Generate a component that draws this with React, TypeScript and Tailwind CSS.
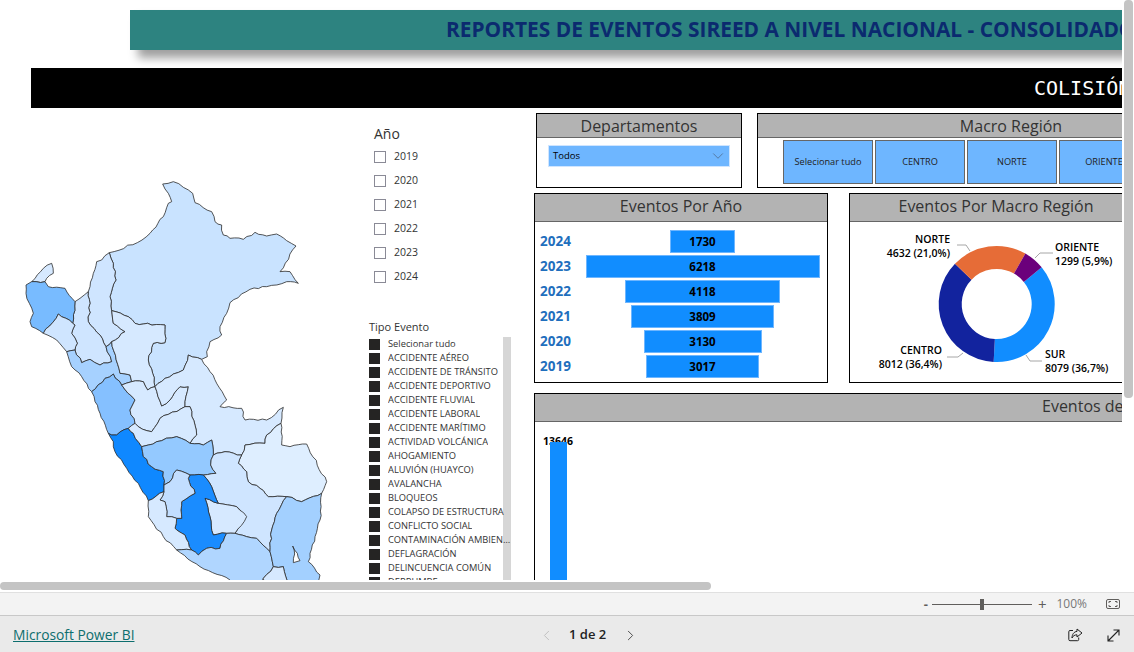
import React from "react";
import { ChevronDown, ChevronLeft, ChevronRight } from "lucide-react";

const years = ["2019", "2020", "2021", "2022", "2023", "2024"];

const tipos = [
  "Selecionar tudo",
  "ACCIDENTE AÉREO",
  "ACCIDENTE DE TRÁNSITO",
  "ACCIDENTE DEPORTIVO",
  "ACCIDENTE FLUVIAL",
  "ACCIDENTE LABORAL",
  "ACCIDENTE MARÍTIMO",
  "ACTIVIDAD VOLCÁNICA",
  "AHOGAMIENTO",
  "ALUVIÓN (HUAYCO)",
  "AVALANCHA",
  "BLOQUEOS",
  "COLAPSO DE ESTRUCTURA",
  "CONFLICTO SOCIAL",
  "CONTAMINACIÓN AMBIENTAL",
  "DEFLAGRACIÓN",
  "DELINCUENCIA COMÚN",
  "DERRUMBE",
];

const porAno = [
  { year: "2024", value: 1730, w: 65 },
  { year: "2023", value: 6218, w: 234 },
  { year: "2022", value: 4118, w: 155 },
  { year: "2021", value: 3809, w: 143 },
  { year: "2020", value: 3130, w: 118 },
  { year: "2019", value: 3017, w: 113 },
];

const macroButtons = ["Selecionar tudo", "CENTRO", "NORTE", "ORIENTE", "SUR"];

// coordinates are traced at 3x, the svg below scales them back down
const regions = [
  { fill: "#c9e3ff", d: "328,248 412,218 450,190 490,140 505,100 515,95 505,70 488,42 520,35 550,52 578,70 585,98 635,125 645,155 665,165 670,195 690,205 730,208 765,187 800,198 830,192 860,212 888,228 840,305 870,305 895,340 860,335 800,350 750,358 690,398 680,430 660,470 665,495 630,515 620,545 622,560 605,568 565,555 550,600 520,612 495,625 465,650 458,610 445,570 460,520 495,518 495,465 430,462 405,460 385,440 335,422 330,380 348,330 340,280" },
  { fill: "#cfe5ff", d: "328,248 340,280 348,330 330,380 335,422 340,460 375,485 335,515 318,530 300,495 265,455 270,400 265,365 270,350 280,310 290,275 305,270" },
  { fill: "#cfe5ff", d: "265,365 270,400 265,455 300,495 318,530 335,575 300,585 270,568 245,578 225,540 232,520 215,490 225,465 218,460 225,395 240,385" },
  { fill: "#d6e9ff", d: "95,335 130,295 155,280 160,310 140,325 135,335" },
  { fill: "#78bbff", d: "78,345 95,335 135,335 145,350 195,355 225,395 218,460 175,432 130,490 95,470 90,455 100,430 88,400 78,370" },
  { fill: "#cfe5ff", d: "130,490 175,432 218,460 225,465 215,490 232,520 225,540 200,545 170,510" },
  { fill: "#a6d1ff", d: "200,545 225,540 245,578 270,568 300,585 335,575 318,530 335,515 360,610 390,615 395,635 365,645 340,612 315,625 275,665 245,620 215,590" },
  { fill: "#85c0ff", d: "275,665 315,625 340,612 365,645 405,690 390,720 405,760 385,775 350,795 335,795 325,790 300,730 285,695" },
  { fill: "#0f88ff", d: "325,790 335,795 350,795 385,775 400,790 425,830 430,860 455,890 490,905 492,945 492,965 445,992 415,940 380,895 345,845 340,815" },
  { fill: "#d6e9ff", d: "335,422 385,440 405,460 430,462 495,465 495,518 460,520 445,570 458,610 465,650 443,660 430,635 395,635 390,615 360,610 335,515 375,485 340,460" },
  { fill: "#d6e9ff", d: "365,645 395,635 430,635 443,660 465,650 485,708 510,690 540,650 565,650 555,710 480,745 455,785 415,770 405,760 390,720 405,690" },
  { fill: "#d6e9ff", d: "465,650 495,625 520,612 550,600 565,555 605,568 630,605 680,690 660,710 725,715 735,750 800,750 850,712 843,760 800,795 795,820 735,825 725,855 675,845 640,855 635,810 610,825 570,820 590,795 570,710 555,710 565,650 540,650 510,690 485,708" },
  { fill: "#d6e9ff", d: "405,760 415,770 455,785 480,745 555,710 570,710 590,795 570,820 530,800 470,815 445,825 425,830 400,790 385,775" },
  { fill: "#94c9ff", d: "425,830 445,825 470,815 530,800 570,820 610,825 635,810 640,855 632,885 648,910 610,915 570,915 530,900 510,935 492,945 490,905 455,890 430,860" },
  { fill: "#deeeff", d: "843,760 845,825 870,830 920,822 980,935 965,970 905,995 860,980 805,980 780,955 745,935 740,905 715,880 725,855 735,825 795,820 800,795" },
  { fill: "#cfe5ff", d: "640,855 675,845 725,855 715,880 740,905 745,935 780,955 805,980 860,980 830,1030 815,1080 810,1145 770,1105 740,1100 705,1090 735,1040 710,1010 655,1000 635,950 610,915 648,910 632,885" },
  { fill: "#d6e9ff", d: "615,985 655,1000 710,1010 740,1040 705,1090 680,1090 640,1095 630,1040" },
  { fill: "#1a8cff", d: "570,915 610,915 635,950 655,1000 615,985 630,1040 640,1095 680,1090 660,1135 620,1135 595,1155 575,1140 555,1095 525,1075 530,1045 545,1045 545,995 585,970 565,925" },
  { fill: "#c2deff", d: "510,935 530,900 570,915 565,925 585,970 545,995 545,1045 530,1045 500,1040 495,995 480,990 492,965 492,945" },
  { fill: "#d6e9ff", d: "445,992 492,965 480,990 495,995 500,1040 530,1045 525,1075 555,1095 575,1140 530,1140 490,1100 445,1040" },
  { fill: "#b0d6ff", d: "530,1140 575,1140 595,1155 620,1135 660,1135 680,1090 705,1090 740,1100 770,1105 810,1145 820,1190 790,1225 780,1260 720,1260 690,1230 600,1190" },
  { fill: "#a3d0ff", d: "860,980 905,995 965,970 960,1050 945,1100 930,1150 925,1175 960,1215 945,1260 870,1260 850,1190 820,1190 810,1145 815,1080 830,1030" },
  { fill: "#d6e9ff", d: "790,1225 820,1190 850,1190 870,1260 790,1260" },
  { fill: "#ffffff", d: "878,1128 892,1150 900,1172 880,1178 884,1152" },
];

// breaks every edge into small steps; the offset only depends on the edge,
// so two regions sharing a border get the same wobble
function roughen(points: string) {
  const pts = points.split(" ").map((p) => p.split(",").map(Number));
  const out: string[] = [];
  pts.forEach((a, i) => {
    const b = pts[(i + 1) % pts.length];
    const forward = a[0] < b[0] || (a[0] === b[0] && a[1] < b[1]);
    const [p, q] = forward ? [a, b] : [b, a];
    const len = Math.hypot(q[0] - p[0], q[1] - p[1]);
    const steps = Math.max(1, Math.round(len / 14));
    const nx = -(q[1] - p[1]) / (len || 1);
    const ny = (q[0] - p[0]) / (len || 1);
    const mid: string[] = [];
    for (let s = 1; s < steps; s++) {
      const t = s / steps;
      const r = Math.sin(p[0] * 12.9898 + p[1] * 78.233 + q[0] * 37.719 + q[1] * 4.581 + s * 93.9) * 43758.5453;
      const off = ((r - Math.floor(r)) - 0.5) * 6;
      mid.push(`${(p[0] + (q[0] - p[0]) * t + nx * off).toFixed(1)},${(p[1] + (q[1] - p[1]) * t + ny * off).toFixed(1)}`);
    }
    if (!forward) mid.reverse();
    out.push(`${a[0]},${a[1]}`, ...mid);
  });
  return out.join(" ");
}

function PeruMap() {
  return (
    <svg width="340" height="420" viewBox="0 0 1020 1260" className="mt-[62px] block">
      {regions.map((r, i) => (
        <polygon key={i} points={roughen(r.d)} fill={r.fill} stroke="#2b2b2b" strokeWidth="2.4" strokeLinejoin="round" />
      ))}
    </svg>
  );
}

function slicePath(cx: number, cy: number, r0: number, r1: number, a0: number, a1: number) {
  const pt = (r: number, a: number) => {
    const t = (a * Math.PI) / 180;
    return `${(cx + r * Math.sin(t)).toFixed(2)} ${(cy - r * Math.cos(t)).toFixed(2)}`;
  };
  const large = a1 - a0 > 180 ? 1 : 0;
  return `M ${pt(r1, a0)} A ${r1} ${r1} 0 ${large} 1 ${pt(r1, a1)} L ${pt(r0, a1)} A ${r0} ${r0} 0 ${large} 0 ${pt(r0, a0)} Z`;
}

const slices = [
  { fill: "#118dff", from: 50.8, to: 183 },
  { fill: "#12239e", from: 183, to: 314 },
  { fill: "#e66c37", from: 314, to: 389.6 },
  { fill: "#6b007b", from: 389.6, to: 410.8 },
];

function Donut() {
  const label = "fill-black text-[10.5px] font-semibold";
  return (
    <svg width="292" height="160" viewBox="850 222 292 160" className="block">
      {slices.map((s) => (
        <path key={s.fill} d={slicePath(996.7, 304, 35, 58, s.from, s.to)} fill={s.fill} />
      ))}
      <g fill="none" stroke="#a6a6a6" strokeWidth="1">
        <path d="M957 245 L966 245 L970 251" />
        <path d="M1053 253 L1040 253 L1035 258" />
        <path d="M947 357 L958 357 L963 353" />
        <path d="M1042 361 L1030 361 L1026 355" />
      </g>
      <text x="950" y="243" textAnchor="end" className={label}>NORTE</text>
      <text x="950" y="257" textAnchor="end" className={label}>4632 (21,0%)</text>
      <text x="1055" y="251" className={label}>ORIENTE</text>
      <text x="1055" y="265" className={label}>1299 (5,9%)</text>
      <text x="942" y="354" textAnchor="end" className={label}>CENTRO</text>
      <text x="942" y="368" textAnchor="end" className={label}>8012 (36,4%)</text>
      <text x="1045" y="358" className={label}>SUR</text>
      <text x="1045" y="372" className={label}>8079 (36,7%)</text>
    </svg>
  );
}

function PanelHeader({ title, className }: { title: string; className: string }) {
  return (
    <div className={`${className} flex items-center bg-[#b3b3b3] border-b border-[#666] text-[16px] text-[#333] leading-none`}>
      {title}
    </div>
  );
}

export default function App() {
  return (
    <div className="w-[1134px] h-[652px] overflow-hidden flex flex-col bg-white font-['Open_Sans',sans-serif]">
      <div className="flex h-[580px]">
        {/* report canvas, wider than the window */}
        <div className="w-[1122px] h-[580px] overflow-hidden">
          <div className="w-[1770px] pt-[10px]">
            <div className="ml-[130px] h-[40px] bg-[#2d8380] shadow-[8px_8px_9px_rgba(0,0,0,0.38)] flex items-center pl-[316px] text-[20.9px] font-bold text-[#0b2a6f] whitespace-nowrap">
              REPORTES DE EVENTOS SIREED A NIVEL NACIONAL - CONSOLIDADO
            </div>
            <div className="ml-[31px] mt-[18px] h-[40px] bg-black flex items-center pl-[1003px] text-[20px] text-white font-['DejaVu_Sans_Mono',monospace] whitespace-nowrap">
              COLISIÓN
            </div>

            <div className="flex">
              <div className="w-[362px] shrink-0">
                <PeruMap />
              </div>

              {/* slicers */}
              <div className="w-[172px] shrink-0 pl-[7px]">
                <div className="pl-[5px] pt-[15px]">
                  <div className="h-[20px] mb-[2px] flex items-center text-[14px] text-[#333]">Año</div>
                  {years.map((y) => (
                    <div key={y} className="h-[24px] flex items-center gap-[8px]">
                      <span className="w-[12px] h-[12px] border border-[#8a8a96] bg-white" />
                      <span className="text-[10.5px] text-[#333]">{y}</span>
                    </div>
                  ))}
                </div>
                <div className="mt-[31px] h-[14px] flex items-center text-[11px] text-[#333]">Tipo Evento</div>
                <div className="relative mt-[3px] w-[142px]">
                  <div className="absolute right-0 top-0 w-[8px] h-[260px] bg-[#d6d6d6]" />
                  {tipos.map((t) => (
                    <div key={t} className="relative h-[14px] flex items-center gap-[8px]">
                      <span className="w-[11px] h-[11px] shrink-0 bg-[#252423]" />
                      <span className="truncate text-[9.3px] text-[#333]">{t}</span>
                    </div>
                  ))}
                </div>
              </div>

              {/* visuals */}
              <div className="flex-1 min-w-0">
                <div className="flex mt-[5px] ml-[2px] gap-[15px]">
                  <div className="w-[206px] h-[75px] border border-black">
                    <PanelHeader title="Departamentos" className="h-[24px] justify-center" />
                    <div className="mx-[11px] mt-[7px] h-[22px] bg-[#6eb6ff] border border-[#cfe5ff] flex items-center justify-between pl-[4px] pr-[2px] text-[9.5px] text-black">
                      <span>Todos</span>
                      <ChevronDown size={18} strokeWidth={0.8} className="text-[#44546a]" />
                    </div>
                  </div>
                  <div className="w-[508px] h-[75px] border border-black">
                    <PanelHeader title="Macro Región" className="h-[24px] justify-center" />
                    <div className="flex justify-center gap-[2px] mt-[2px] pl-[2px]">
                      {macroButtons.map((b) => (
                        <div key={b} className="w-[90px] h-[44px] bg-[#6eb6ff] border border-[#666] flex items-center justify-center text-[9.2px] text-[#222]">
                          {b}
                        </div>
                      ))}
                    </div>
                  </div>
                </div>

                <div className="flex mt-[5px] gap-[21px]">
                  <div className="w-[294px] h-[190px] border border-black">
                    <PanelHeader title="Eventos Por Año" className="h-[28px] pb-[3px] justify-center" />
                    <div className="pt-[8px] pl-[5px]">
                      {porAno.map((r) => (
                        <div key={r.year} className="h-[25px] flex items-start">
                          <span className="w-[41px] text-[13.5px] font-bold leading-[23px] text-[#1f6fbd]">{r.year}</span>
                          <div className="w-[243px] flex justify-center">
                            <div
                              className="h-[23px] pt-[1px] bg-[#118dff] border border-[#6eb6ff] flex items-center justify-center text-[11.5px] font-bold text-black"
                              style={{ width: r.w }}
                            >
                              {r.value}
                            </div>
                          </div>
                        </div>
                      ))}
                    </div>
                  </div>
                  <div className="w-[294px] h-[190px] border border-black">
                    <PanelHeader title="Eventos Por Macro Región" className="h-[28px] pb-[3px] justify-center" />
                    <Donut />
                  </div>
                </div>

                <div className="mt-[10px] w-[1200px] h-[300px] border border-black">
                  <PanelHeader title="Eventos de" className="h-[28px] pb-[3px] pl-[507px]" />
                  <div className="pl-[14px] pt-[13px]">
                    <div className="w-[18px] flex flex-col items-center">
                      <span className="text-[10.5px] font-bold leading-[12px] text-black h-[7px]">13646</span>
                      <div className="w-[17px] h-[200px] bg-[#118dff]" />
                    </div>
                  </div>
                </div>
              </div>
            </div>
          </div>
        </div>
        <div className="w-[12px] pl-[2px]">
          <div className="w-[9px] h-[398px] rounded-[4px] bg-[#c4c4c4]" />
        </div>
      </div>

      <div className="h-[12px] pt-[2px]">
        <div className="w-[711px] h-[8px] rounded-[4px] bg-[#c4c4c4]" />
      </div>

      {/* zoom bar */}
      <div className="h-[23px] bg-[#f3f3f3] border-t border-[#e0e0e0] flex items-center justify-end text-[#605e5c]">
        <span className="text-[13px] font-bold leading-none mr-[4px]">-</span>
        <div className="w-[100px] h-[1px] bg-[#605e5c] flex items-center justify-center mr-[6px]">
          <span className="w-[4px] h-[11px] bg-[#605e5c]" />
        </div>
        <span className="text-[15px] leading-none mr-[10px]">+</span>
        <span className="text-[12px] mr-[19px] text-[#777]">100%</span>
        <svg width="14" height="10" viewBox="0 0 14 10" fill="none" stroke="#605e5c" className="mr-[14px]">
          <rect x="0.5" y="0.5" width="13" height="9" rx="1.5" />
          <path d="M3 4 V2.5 H5 M9 2.5 H11 V4 M11 6 V7.5 H9 M5 7.5 H3 V6" />
        </svg>
      </div>

      {/* footer */}
      <div className="flex-1 bg-[#eaeaea] border-t border-[#c8c8c8] relative flex items-center justify-between pl-[13px] pr-[14px] pt-[2px]">
        <a className="text-[13.8px] text-[#0d6e6e] underline pt-[1px]">Microsoft Power BI</a>
        <div className="absolute left-[538px] top-[1px] h-full flex items-center">
          <ChevronLeft size={17} strokeWidth={1.3} className="text-[#bdbdbd]" />
          <span className="ml-[14px] mr-[16px] text-[13px] font-semibold text-[#222]">1 de 2</span>
          <ChevronRight size={17} strokeWidth={1.3} className="text-[#444]" />
        </div>
        <div className="flex items-center gap-[24px]">
          <svg width="15" height="14" viewBox="0 0 15 14" fill="none" stroke="#222" strokeWidth="1">
            <path d="M5 2.5 H2 a1.2 1.2 0 0 0 -1.2 1.2 V11.5 a1.2 1.2 0 0 0 1.2 1.2 H9.5 a1.2 1.2 0 0 0 1.2 -1.2 V9.5" />
            <path d="M9 1 L14 5 L9 9 V6.8 C6.5 6.8 5 8 4 10 C4 6.5 6 3.6 9 3.4 Z" />
          </svg>
          <svg width="13" height="13" viewBox="0 0 13 13" fill="none" stroke="#222" strokeWidth="1.1">
            <path d="M1 12 L12 1 M6.5 1 H12 V6.5 M1 6.5 V12 H6.5" />
          </svg>
        </div>
      </div>
    </div>
  );
}
